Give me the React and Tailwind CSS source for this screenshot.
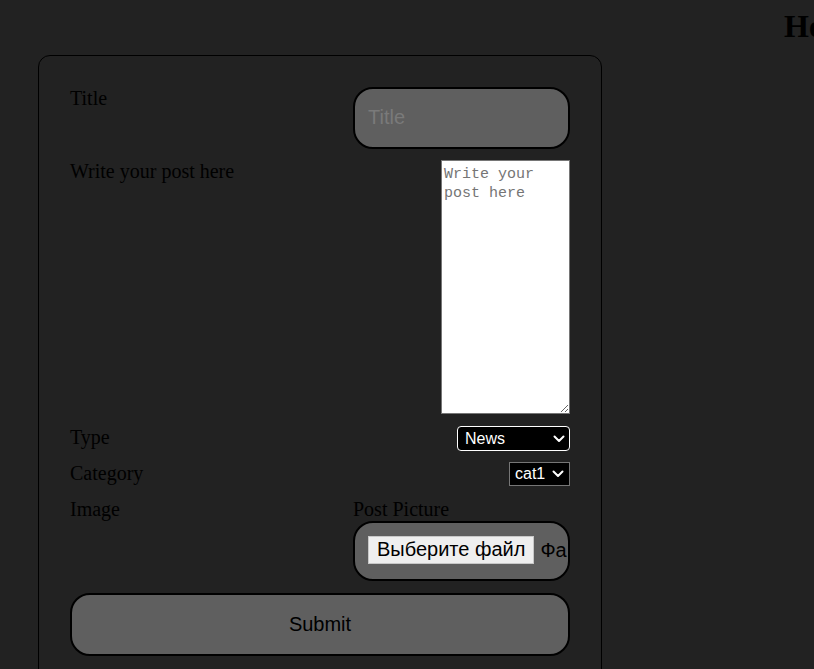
function Chevron({ className }) {
  return (
    <svg
      className={`pointer-events-none absolute ${className}`}
      width="12"
      height="8"
      viewBox="0 0 12 8"
      fill="none"
    >
      <path d="M1.5 1.5 L6 6 L10.5 1.5" stroke="white" strokeWidth="2" strokeLinecap="round" strokeLinejoin="round" />
    </svg>
  );
}

export default function App() {
  const sans = "font-['Liberation_Sans',Arial,sans-serif]";
  return (
    <div className="h-[669px] w-[814px] overflow-hidden bg-[#222222] flex font-['Liberation_Serif','Times_New_Roman',serif] text-black">
      <div className="pl-[38px] pt-[55px] shrink-0">
        <form className="w-[564px] h-[700px] border border-black rounded-[12px] p-[31px] flex flex-col">
          <div className="grid grid-cols-[1fr_217px] h-[62px]">
            <label className="text-[20px] leading-[23px]">Title</label>
            <input
              placeholder="Title"
              className={`w-[217px] h-[62px] rounded-[20px] border-2 border-black bg-[#5f5f5f] px-[13px] pb-[2px] text-[20px] ${sans} placeholder:text-[#7a7a7a] outline-none`}
            />
          </div>
          <div className="mt-[11px] grid grid-cols-[1fr_217px] h-[254px]">
            <label className="text-[20px] leading-[23px]">Write your post here</label>
            <textarea
              placeholder="Write your post here"
              className="justify-self-end w-[129px] h-[254px] border border-[#767676] bg-white px-[2px] pt-[4px] font-['Liberation_Mono',monospace] text-[15px] leading-[19px] text-black placeholder:text-[#757575] resize"
            />
          </div>
          <div className="mt-[12px] grid grid-cols-[1fr_217px] h-[25px]">
            <label className="text-[20px] leading-[23px]">Type</label>
            <div className="relative justify-self-end w-[113px] h-[25px]">
              <select
                className={`appearance-none w-[113px] h-[25px] bg-black text-white border border-white rounded-[4px] text-[16px] leading-[23px] ${sans} pl-[7px] outline-none`}
                defaultValue="News"
              >
                <option>News</option>
                <option>Article</option>
              </select>
              <Chevron className="left-[96px] top-[9px]" />
            </div>
          </div>
          <div className="mt-[11px] grid grid-cols-[1fr_217px] h-[24px]">
            <label className="text-[20px] leading-[23px]">Category</label>
            <div className="relative justify-self-end w-[61px] h-[24px]">
              <select
                className={`appearance-none w-[61px] h-[24px] bg-black text-white border border-[#767676] text-[16px] leading-[22px] ${sans} pl-[5px] outline-none`}
                defaultValue="cat1"
              >
                <option>cat1</option>
                <option>cat2</option>
              </select>
              <Chevron className="left-[43px] top-[8px]" />
            </div>
          </div>
          <div className="mt-[12px] grid grid-cols-[1fr_217px]">
            <label className="text-[20px] leading-[23px]">Image</label>
            <div className="flex flex-col">
              <span className="text-[20px] leading-[23px]">Post Picture</span>
              <div className="w-[217px] h-[60px] rounded-[20px] border-2 border-black bg-[#5f5f5f] pl-[13px] pb-[2px] flex items-center overflow-hidden whitespace-nowrap">
                <span className={`h-[28px] px-[8px] bg-[#efefef] border border-[#c8c8c8] text-[20px] leading-[25px] ${sans} text-black shrink-0`}>
                  Выберите файл
                </span>
                <span className={`ml-[6px] text-[20px] ${sans} text-black`}>Фа</span>
              </div>
            </div>
          </div>
          <button
            type="button"
            className={`mt-[12px] w-full h-[63px] rounded-[20px] border-2 border-black bg-[#5f5f5f] pb-[2px] text-[20px] ${sans} text-black`}
          >
            Submit
          </button>
        </form>
      </div>
      <h1 className="ml-[182px] mt-[2px] text-[32px] font-bold leading-normal whitespace-nowrap text-black">
        Hello
      </h1>
    </div>
  );
}
